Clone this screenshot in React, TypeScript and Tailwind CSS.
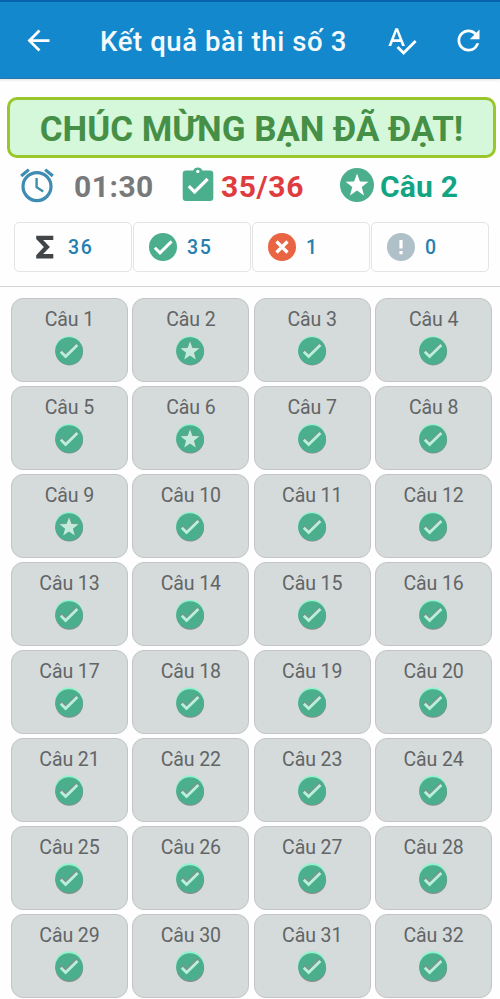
import type { ReactNode } from "react";

const starred = [2, 6, 9];
const questions = Array.from({ length: 32 }, (_, i) => i + 1);

const CHECK = "M6.1 14.9l4.8 4.7L22.7 8.2";
const STAR =
  "M14 4.5l2.4 6.6 7 .2-5.5 4.4 1.9 6.9-5.8-4-5.8 4 1.9-6.9-5.5-4.4 7-.2z";

function BarIcon({ d, className = "" }: { d: string; className?: string }) {
  return (
    <svg viewBox="0 0 24 24" className={`h-[33px] w-[33px] shrink-0 fill-white ${className}`}>
      <path d={d} />
    </svg>
  );
}

function AlarmIcon() {
  return (
    <svg viewBox="0 0 36 36" className="h-9 w-9 shrink-0" fill="none" stroke="#3f8cb2">
      <circle cx="18" cy="19.6" r="14" strokeWidth="3.2" />
      <path d="M17.6 11v9.2l6.6 4.3" strokeWidth="2.4" />
      <path d="M2.2 9l7.6-6.4M33.8 9l-7.6-6.4" strokeWidth="3.2" />
    </svg>
  );
}

function ClipboardIcon() {
  return (
    <svg viewBox="0 0 32 35" className="h-[35px] w-8 shrink-0">
      <path
        fill="#4bae8d"
        fillRule="evenodd"
        d="M4 3.6h7.2a4.9 4.9 0 0 1 9.2 0H28a3.3 3.3 0 0 1 3.3 3.3v23.9a3.3 3.3 0 0 1-3.3 3.3H4a3.3 3.3 0 0 1-3.3-3.3V6.9A3.3 3.3 0 0 1 4 3.6zm11.8-.9a1.7 1.7 0 1 0 0 3.4 1.7 1.7 0 0 0 0-3.4z"
      />
      <path d="M6.8 19.2l5.8 5.8L25.6 12" fill="none" stroke="#fff" strokeWidth="3.2" />
    </svg>
  );
}

function Disc({ color, children }: { color: string; children: ReactNode }) {
  return (
    <svg viewBox="0 0 28 28" className="h-7 w-7 shrink-0">
      <circle cx="14" cy="14" r="14" fill={color} />
      {children}
    </svg>
  );
}

// The bevel gets deeper towards the bottom of the list.
function QuestionIcon({ star, bevel }: { star: boolean; bevel: number }) {
  return (
    <svg viewBox="0 0 30 30" className="h-[30px] w-[30px] overflow-visible">
      <circle cx="14.8" cy={15 - bevel} r="13.8" fill="#8ff3cb" />
      <circle cx="15.3" cy={15 + bevel * 0.6} r="13.8" fill="#85908c" />
      <circle cx="15" cy="15" r="13.8" fill="#4bae8d" />
      {star ? (
        <g transform="translate(1 1)">
          <path d={STAR} fill="#7f9b92" transform="translate(.3 -.8)" />
          <path d={STAR} fill="#c5eadc" />
        </g>
      ) : (
        <g transform="translate(.7 .9)" fill="none" strokeWidth="2.8">
          <path d={CHECK} stroke="#7f918b" transform={`translate(-.2 ${-bevel})`} />
          <path d={CHECK} stroke="#b8f0da" />
        </g>
      )}
    </svg>
  );
}

function Stat({ value, children }: { value: string; children: ReactNode }) {
  return (
    <div className="flex h-[50px] items-center rounded-[5px] border-[1.5px] border-[#e2e4e5] pl-[15px]">
      {children}
      <span className="ml-2.5 pt-0.5 text-[19.5px] font-medium tracking-[1.7px] text-[#2580b0]">
        {value}
      </span>
    </div>
  );
}

function App() {
  return (
    <div className="h-[999px] w-[500px] overflow-hidden bg-[#fefefe] font-[Roboto,sans-serif]">
      <header className="flex h-[79px] items-center border-t-2 border-b border-t-[#0762ae] border-b-[#2878ab] bg-[#1488cd] pl-[22px] shadow-[0_1px_3px_rgba(0,0,0,0.12)]">
        <BarIcon d="M20 11H7.83l5.59-5.59L12 4l-8 8 8 8 1.41-1.41L7.83 13H20v-2z" />
        <h1 className="ml-[45px] w-[283px] whitespace-nowrap pt-[3px] text-[27.5px] font-medium tracking-[0.6px] text-[#f4fbff]">
          Kết quả bài thi số 3
        </h1>
        <BarIcon
          className="ml-0.5"
          d="M12.45 16h2.09L9.43 3H7.57L2.46 16h2.09l1.12-3h5.64l1.14 3zm-6.02-5L8.5 5.48 10.57 11H6.43zm15.16.59l-8.09 8.09L9.83 16l-1.41 1.41 5.09 5.09L23 13l-1.41-1.41z"
        />
        <BarIcon
          className="ml-[34px]"
          d="M17.65 6.35A7.958 7.958 0 0 0 12 4c-4.42 0-7.99 3.58-7.99 8s3.57 8 7.99 8c3.73 0 6.84-2.55 7.73-6h-2.08A5.99 5.99 0 0 1 12 18c-3.31 0-6-2.69-6-6s2.69-6 6-6c1.66 0 3.14.69 4.22 1.78L13 11h7V4l-2.35 2.35z"
        />
      </header>

      <div className="mt-[18px] ml-[7px] flex h-[61px] w-[489px] items-center justify-center rounded-[10px] border-[3px] border-[#98c62b] bg-[#d5f8da]">
        <p className="whitespace-nowrap pt-[5px] text-[34.9px] leading-none font-bold text-[#458f47]">
          CHÚC MỪNG BẠN ĐÃ ĐẠT!
        </p>
      </div>

      <div className="flex h-[64px] items-start pl-[19px] pt-[9px] text-[30px] leading-[40px] font-bold">
        <AlarmIcon />
        <span className="ml-[19px] w-[108px] tracking-[0.5px] text-[#77797a]">01:30</span>
        <ClipboardIcon />
        <span className="ml-[7px] w-[119px] tracking-[0.6px] text-[#df3c40]">35/36</span>
        <svg viewBox="0 0 28 28" className="mt-px h-[34px] w-[34px] shrink-0">
          <circle cx="14" cy="14" r="14" fill="#4bae8d" />
          <path d={STAR} fill="#fff" />
        </svg>
        <span className="ml-[6px] whitespace-nowrap tracking-[0.2px] text-[#12a584]">Câu 2</span>
      </div>

      <div className="ml-[14px] grid w-[475px] grid-cols-4 gap-px">
        <Stat value="36">
          <svg viewBox="0 0 28 28" className="h-7 w-7 shrink-0" fill="#414548">
            <path d="M6.2 2.7h17.1v4.2H13.1l6.8 7.2-6.8 6.8h10.2v4.5H6.2v-3.2l7.7-8.1-7.7-8.1z" />
          </svg>
        </Stat>
        <Stat value="35">
          <Disc color="#4bae8d">
            <path d="M5.8 14.7l5.2 5.2L22.6 8.4" fill="none" stroke="#fff" strokeWidth="2.9" />
          </Disc>
        </Stat>
        <Stat value="1">
          <Disc color="#e96443">
            <path d="M8.5 8.5l11 11m0-11l-11 11" stroke="#fff" strokeWidth="3.2" />
          </Disc>
        </Stat>
        <Stat value="0">
          <Disc color="#afc0c9">
            <path d="M14 7v8.6m0 2.4v3.2" stroke="#fff" strokeWidth="3.2" />
          </Disc>
        </Stat>
      </div>

      <div className="mt-[14px] h-px bg-[#d2d4d5]" />

      <div className="mt-[11px] ml-[11px] grid w-[481px] grid-cols-4 gap-x-[4.5px] gap-y-1">
        {questions.map((n) => (
          <div
            key={n}
            className="flex h-[84px] flex-col items-center rounded-xl border-[1.5px] border-[#c3c5c5] bg-[#d5dadb] pt-2"
          >
            <span className="text-[19.5px] leading-[26px] tracking-[-0.1px] text-[#626566]">Câu {n}</span>
            <span className="mt-[3px] mr-px">
              <QuestionIcon star={starred.includes(n)} bevel={1 + Math.floor((n - 1) / 4) * 0.15} />
            </span>
          </div>
        ))}
      </div>
    </div>
  );
}

export default App;
